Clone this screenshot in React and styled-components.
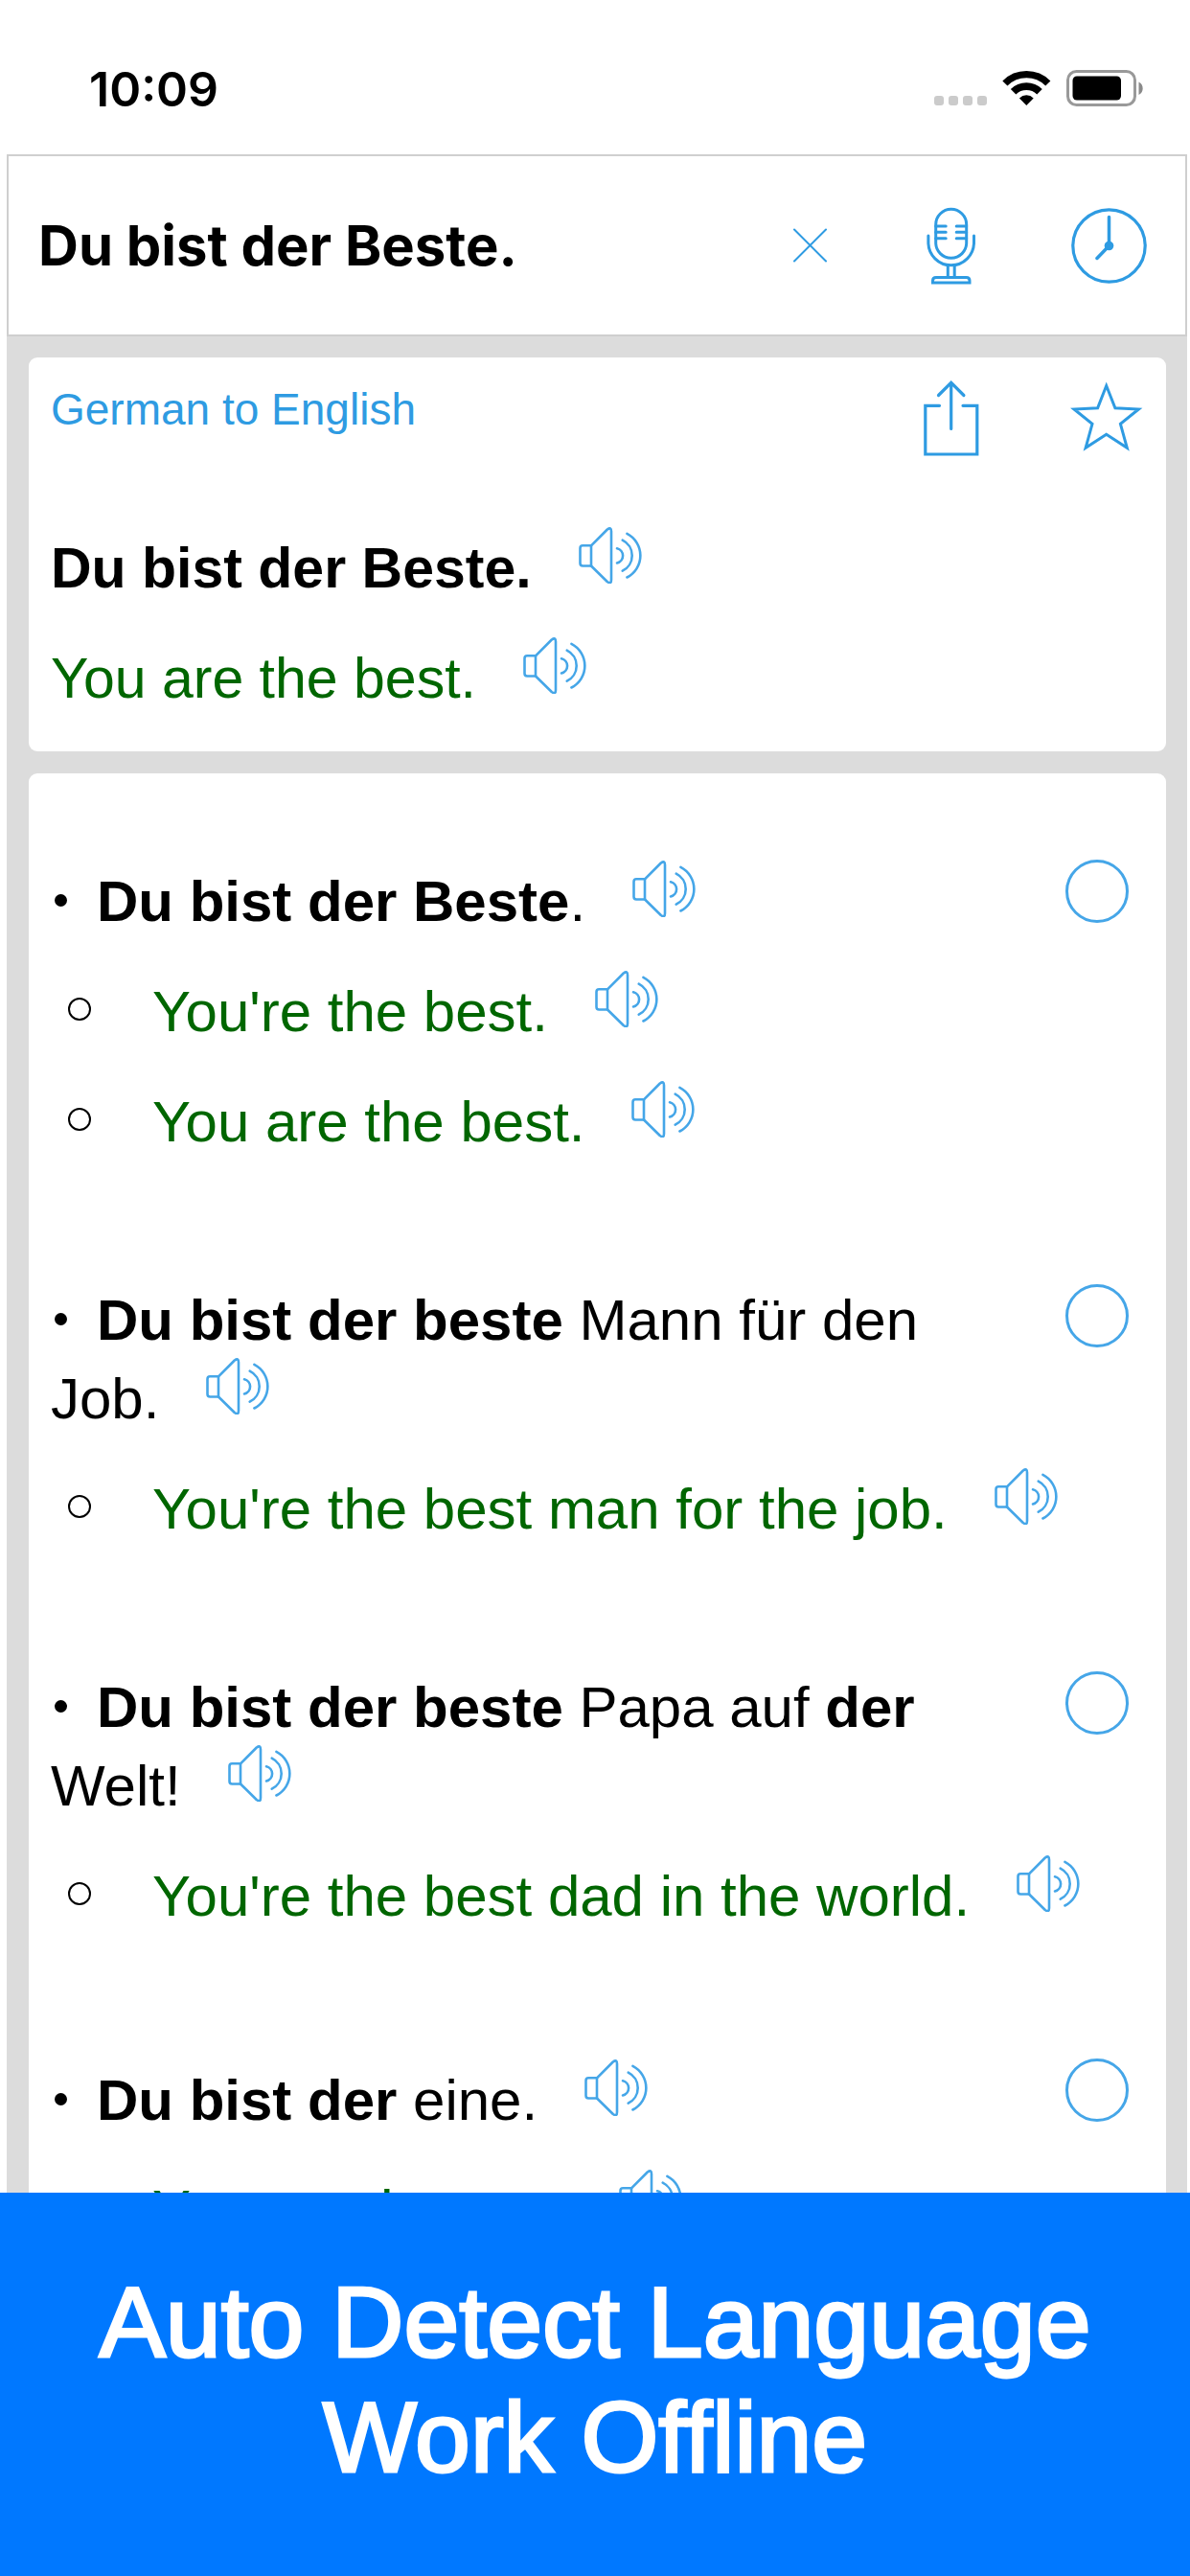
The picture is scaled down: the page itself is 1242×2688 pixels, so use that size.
import React from "react"
import styled, { createGlobalStyle } from "styled-components"

const blue = "#2e9be2"
const lightBlue = "#45a6e8"
const green = "#006600"

const GlobalStyle = createGlobalStyle`
  * {
    box-sizing: border-box;
  }

  body {
    margin: 0;
    background: white;
    color: black;
    font-family: "Liberation Sans", Arial, sans-serif;
  }

  ul {
    margin: 0;
    padding: 0;
    list-style: none;
  }
`

const Page = styled.div`
  display: flex;
  flex-direction: column;
  height: 100vh;
`

const StatusBar = styled.div`
  display: flex;
  flex: none;
  align-items: flex-start;
  justify-content: space-between;
  height: 161px;
  padding: 64px 47px 0 93px;
`

const Time = styled.time`
  font-family: Inter, sans-serif;
  font-size: 50px;
  font-weight: 600;
  line-height: 58px;
`

const StatusIcons = styled.div`
  display: flex;
  align-items: flex-end;
  gap: 16px;
  padding-top: 9px;
`

const Signal = styled.div`
  display: flex;
  gap: 5px;
  padding-bottom: 1px;

  span {
    width: 10px;
    height: 10px;
    border-radius: 3px;
    background: #cbcbcb;
  }
`

const Screen = styled.main`
  display: flex;
  flex: 1;
  flex-direction: column;
  min-height: 0;
  margin: 0 3px 0 7px;
  overflow: hidden;
  background: #dcdcdc;
`

const SearchBar = styled.form`
  display: flex;
  flex: none;
  align-items: center;
  gap: 98px;
  height: 190px;
  padding: 0 39px 0 31px;
  border: 2px solid #cfcfcf;
  background: white;
`

const SearchInput = styled.input`
  flex: 1;
  min-width: 0;
  padding: 0;
  border: 0;
  outline: 0;
  background: none;
  color: black;
  font-family: Inter, sans-serif;
  font-size: 58px;
  font-weight: 700;
`

const IconButton = styled.button`
  display: flex;
  flex: none;
  padding: 0 ${(props) => props.$inset || 0}px;
  border: 0;
  background: none;
  color: ${blue};
`

const Cards = styled.div`
  display: flex;
  flex-direction: column;
  gap: 23px;
  padding: 22px 22px 22px 23px;
`

const Card = styled.section`
  padding: ${(props) => (props.$list ? "90px 39px 90px 23px" : "24px 24px 38px 23px")};
  border-radius: 9px;
  background: white;
  font-size: ${(props) => (props.$list ? 60 : 59)}px;
`

const CardHeader = styled.header`
  display: flex;
  align-items: flex-start;
  gap: 95px;
  margin-bottom: 73px;
`

const Direction = styled.a`
  margin-right: auto;
  color: ${blue};
  font-size: 46px;
  line-height: 60px;
  text-decoration: none;
`

const Phrase = styled.p`
  flex: 1;
  margin: 0;
  color: ${(props) => (props.$translated ? green : "black")};
  line-height: 76px;

  & + & {
    margin-top: 33px;
  }
`

const SpeakButton = styled.button`
  display: inline-flex;
  margin-left: 49px;
  padding: 0;
  border: 0;
  background: none;
  color: ${lightBlue};
  vertical-align: 4px;
`

const Entry = styled.li`
  & + & {
    margin-top: 131px;
  }
`

const EntryRow = styled.div`
  display: flex;
  align-items: flex-start;
  gap: 40px;
`

const Bullet = styled.span`
  display: inline-block;
  width: 13px;
  height: 13px;
  margin: 0 31px 0 4px;
  border-radius: 50%;
  background: black;
  vertical-align: 15px;
`

const HollowBullet = styled.span`
  display: inline-block;
  width: 24px;
  height: 24px;
  margin: 0 64px 0 18px;
  border: 2px solid black;
  border-radius: 50%;
  vertical-align: 11px;
`

const RoundCheck = styled.input`
  flex: none;
  width: 66px;
  height: 66px;
  margin: 0;
  appearance: none;
  border: 3px solid ${lightBlue};
  border-radius: 50%;

  &:checked {
    background: ${lightBlue};
  }
`

const Translations = styled.ul`
  li {
    margin-top: 33px;
  }
`

const Banner = styled.footer`
  flex: none;
  padding: 75px 24px 85px;
  background: #0078ff;
  color: white;
  font-size: 104px;
  line-height: 120px;
  text-align: center;
  -webkit-text-stroke: 3px white;

  p {
    margin: 0;
  }
`

const WifiIcon = () => (
  <svg width="51" height="38" viewBox="0 0 51 38" fill="none" stroke="black">
    <path d="M2.9 14a31.8 31.8 0 0 1 44.9 0" strokeWidth="7.3" />
    <path d="M11.6 22.7a19.5 19.5 0 0 1 27.4 0" strokeWidth="7.8" />
    <path d="M25.3 37l-7.4-7.6a10.5 10.5 0 0 1 14.8 0z" fill="black" stroke="none" />
  </svg>
)

const BatteryIcon = () => (
  <svg width="82" height="38" viewBox="0 0 82 38">
    <rect x="1.5" y="1.5" width="70" height="35" rx="9" fill="none" stroke="#999" strokeWidth="3" />
    <rect x="6.5" y="6.5" width="50.5" height="25" rx="4.5" fill="black" />
    <path d="M75.5 12.5c5.6 2.5 5.6 11 0 13.5z" fill="#8a8a8a" />
  </svg>
)

const CloseIcon = () => (
  <svg width="36" height="36" viewBox="0 0 36 36" fill="none" stroke="currentColor" strokeWidth="2" strokeLinecap="round">
    <path d="M1 1.5l33 33M34 1.5l-33 33" />
  </svg>
)

const MicIcon = () => (
  <svg width="53" height="81" viewBox="0 0 53 81" fill="none" stroke="currentColor" strokeWidth="3">
    <rect x="10.7" y="2.3" width="32" height="51" rx="16" />
    <path d="M10.7 20h10.5M10.7 26.3h10.5M10.7 32.7h10.5M42.7 20h-10.5M42.7 26.3h-10.5M42.7 32.7h-10.5M2.9 30v7a23.8 23.8 0 0 0 47.6 0v-7" strokeLinecap="round" />
    <path d="M23.3 61v12M30.2 61v12" />
    <path d="M7.5 79v-2q0-3.5 3.5-3.5h31.5q3.5 0 3.5 3.5v2z" />
  </svg>
)

const ClockIcon = () => (
  <svg width="81" height="81" viewBox="0 0 81 81" fill="none" stroke="currentColor" strokeLinecap="round">
    <circle cx="40.5" cy="40.5" r="37.7" strokeWidth="3.2" />
    <path d="M40.5 10.5v30L28 53.5" strokeWidth="3.5" />
    <circle cx="40.5" cy="40.5" r="4.8" fill="currentColor" stroke="none" />
  </svg>
)

const ShareIcon = () => (
  <svg width="58" height="79" viewBox="0 0 58 79" fill="none" stroke="currentColor" strokeWidth="3.2" strokeLinecap="round">
    <path d="M28.7 50.5V2.5M15.5 15.5l13.2-13.2 13.2 13.2" />
    <path d="M16.5 26.3H1.8V77h54V26.3H41" />
  </svg>
)

const StarIcon = () => (
  <svg width="76" height="76" viewBox="0 0 76 76" fill="none" stroke="currentColor" strokeWidth="3">
    <path d="M37.7 5.5l9.2 23.2 24.5 1.3-19 15.3 6.9 25-21.6-14-21.6 14 6.9-25L4 30l24.6-1.3z" />
  </svg>
)

const SpeakerIcon = () => (
  <svg width="66" height="60" viewBox="0 0 66 60" fill="none" stroke="currentColor" strokeWidth="2.6" strokeLinecap="round" strokeLinejoin="round">
    <path d="M13 20.3H4.2q-2.7 0-2.7 2.7v15.8q0 2.7 2.7 2.7H13z" />
    <path d="M13 20.3L29.8 3.5q4.2-3 4.2 2v50.5q0 5-4.2 2L13 41.5" />
    <path d="M40 23.2a7.85 7.85 0 0 1 0 15.3M45.7 14.7a17.8 17.8 0 0 1 0 32M50.4 7.9a25.6 25.6 0 0 1 0 45.6" />
  </svg>
)

const Speak = () => (
  <SpeakButton type="button" aria-label="Speak">
    <SpeakerIcon />
  </SpeakButton>
)

const entries = [
  {
    id: "beste",
    source: (
      <>
        <b>Du bist der Beste</b>.
      </>
    ),
    translations: ["You're the best.", "You are the best."],
  },
  {
    id: "job",
    source: (
      <>
        <b>Du bist der beste</b> Mann für den Job.
      </>
    ),
    translations: ["You're the best man for the job."],
  },
  {
    id: "papa",
    source: (
      <>
        <b>Du bist der beste</b> Papa auf <b>der</b> Welt!
      </>
    ),
    translations: ["You're the best dad in the world."],
  },
  {
    id: "eine",
    source: (
      <>
        <b>Du bist der</b> eine.
      </>
    ),
    translations: ["You are the one."],
  },
]

const App = () => (
  <>
    <GlobalStyle />
    <Page>
      <StatusBar>
        <Time>10:09</Time>
        <StatusIcons>
          <Signal>
            <span />
            <span />
            <span />
            <span />
          </Signal>
          <WifiIcon />
          <BatteryIcon />
        </StatusIcons>
      </StatusBar>
      <Screen>
        <SearchBar>
          <SearchInput type="text" aria-label="Search" defaultValue="Du bist der Beste." />
          <IconButton type="reset" aria-label="Clear" $inset={4}>
            <CloseIcon />
          </IconButton>
          <IconButton type="button" aria-label="Voice input">
            <MicIcon />
          </IconButton>
          <IconButton type="button" aria-label="History">
            <ClockIcon />
          </IconButton>
        </SearchBar>
        <Cards>
          <Card>
            <CardHeader>
              <Direction href="#languages">German to English</Direction>
              <IconButton type="button" aria-label="Share">
                <ShareIcon />
              </IconButton>
              <IconButton type="button" aria-label="Favorite">
                <StarIcon />
              </IconButton>
            </CardHeader>
            <Phrase>
              <b>Du bist der Beste.</b>
              <Speak />
            </Phrase>
            <Phrase $translated>
              You are the best.
              <Speak />
            </Phrase>
          </Card>
          <Card $list>
            <ul>
              {entries.map((entry) => (
                <Entry key={entry.id}>
                  <EntryRow>
                    <Phrase id={entry.id}>
                      <Bullet />
                      {entry.source}
                      <Speak />
                    </Phrase>
                    <RoundCheck type="checkbox" aria-labelledby={entry.id} />
                  </EntryRow>
                  <Translations>
                    {entry.translations.map((text) => (
                      <li key={text}>
                        <Phrase as="div" $translated>
                          <HollowBullet />
                          {text}
                          <Speak />
                        </Phrase>
                      </li>
                    ))}
                  </Translations>
                </Entry>
              ))}
            </ul>
          </Card>
        </Cards>
      </Screen>
      <Banner>
        <p>Auto Detect Language</p>
        <p>Work Offline</p>
      </Banner>
    </Page>
  </>
)

export default App
